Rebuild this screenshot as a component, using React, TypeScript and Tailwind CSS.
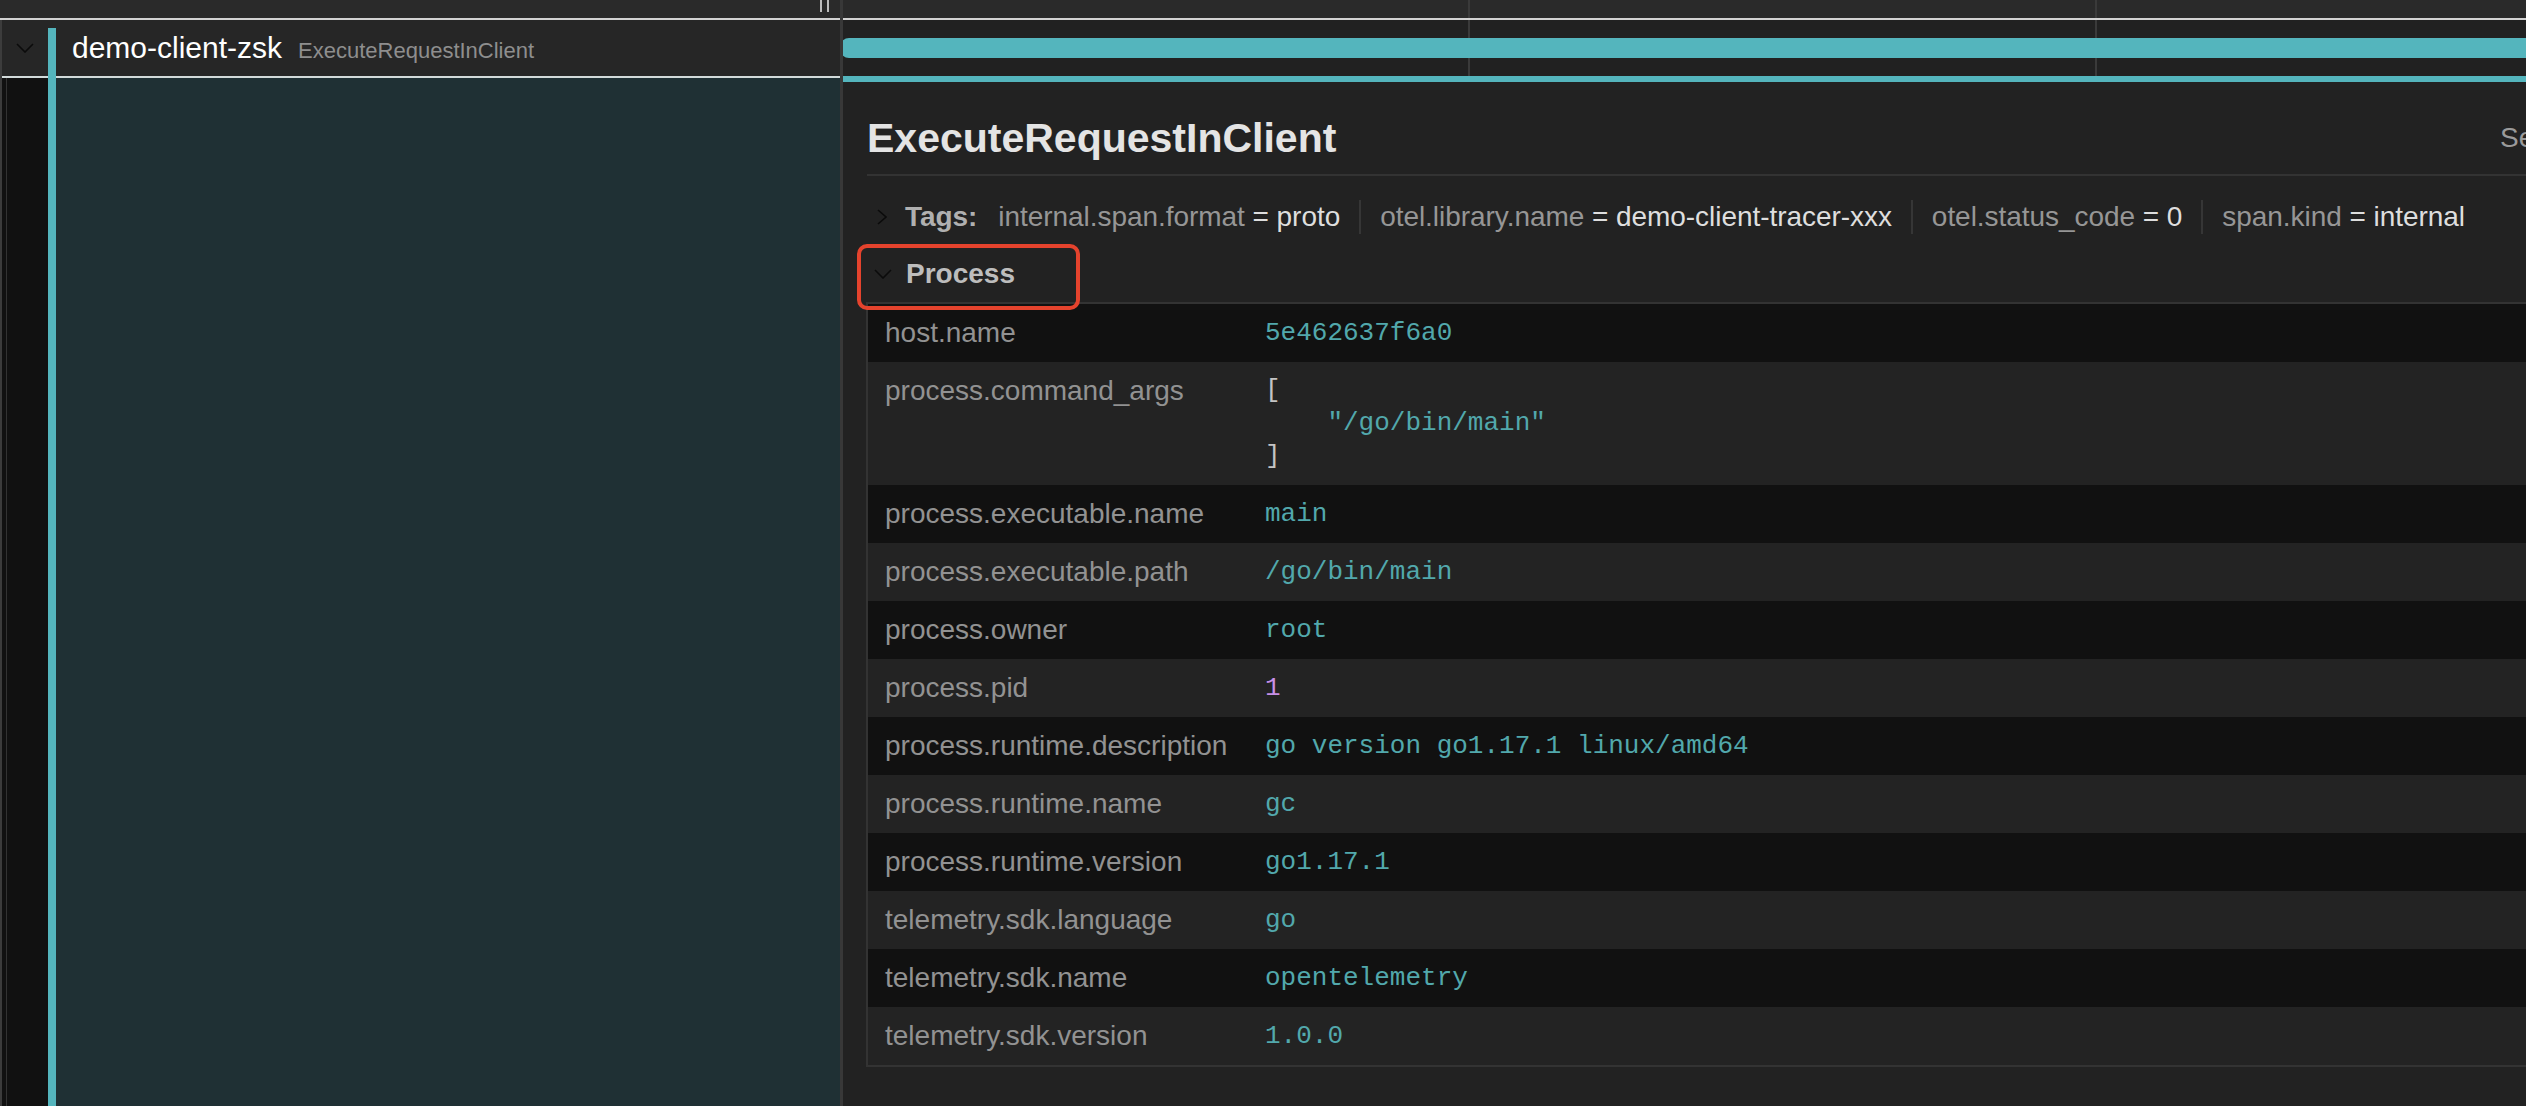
import React from 'react';

const tags = [
  { key: 'internal.span.format', value: 'proto' },
  { key: 'otel.library.name', value: 'demo-client-tracer-xxx' },
  { key: 'otel.status_code', value: '0' },
  { key: 'span.kind', value: 'internal' },
];

const processRows = [
  { key: 'host.name', value: '5e462637f6a0' },
  { key: 'process.command_args', value: '', list: ['/go/bin/main'] },
  { key: 'process.executable.name', value: 'main' },
  { key: 'process.executable.path', value: '/go/bin/main' },
  { key: 'process.owner', value: 'root' },
  { key: 'process.pid', value: '1', numeric: true },
  { key: 'process.runtime.description', value: 'go version go1.17.1 linux/amd64' },
  { key: 'process.runtime.name', value: 'gc' },
  { key: 'process.runtime.version', value: 'go1.17.1' },
  { key: 'telemetry.sdk.language', value: 'go' },
  { key: 'telemetry.sdk.name', value: 'opentelemetry' },
  { key: 'telemetry.sdk.version', value: '1.0.0' },
];

function ChevronDown({ className }: { className?: string }) {
  return (
    <svg className={className} width="18" height="10" viewBox="0 0 18 10" fill="none">
      <polyline points="1,1 9,9 17,1" stroke="#0b0b0b" strokeWidth="1.6" />
    </svg>
  );
}

function ChevronRight({ className }: { className?: string }) {
  return (
    <svg className={className} width="10" height="16" viewBox="0 0 10 16" fill="none">
      <polyline points="1,1 9,8 1,15" stroke="#0b0b0b" strokeWidth="1.6" />
    </svg>
  );
}

export default function App() {
  return (
    <div className="relative flex h-[1106px] w-full overflow-hidden bg-[#222] font-['Liberation_Sans',Arial,sans-serif]">
      {/* Left: span name column */}
      <div className="flex w-[840px] shrink-0 flex-col">
        <div className="relative h-[18px] bg-[#2a2a2a]">
          <div className="absolute left-[820px] top-0 flex h-[12px] gap-[5px]">
            <span className="w-[2px] bg-[#bdbdbd]" />
            <span className="w-[2px] bg-[#bdbdbd]" />
          </div>
        </div>
        <div className="h-[2px] bg-[#d2d2d2]" />
        <div className="flex flex-1">
          <div className="flex w-[48px] flex-col border-l-2 border-[#3c3c3c]">
            <div className="flex h-[56px] items-center justify-center bg-[#262626]">
              <ChevronDown />
            </div>
            <div className="h-[2px] bg-[#d2dada]" />
            <div className="flex-1 bg-[#111] pl-[4px]">
              <div className="h-full w-[1px] bg-[#333]" />
            </div>
          </div>
          <div className="flex w-[8px] flex-col bg-[#262626]">
            <div className="mt-[8px] flex-1 bg-[#54b5bd]" />
          </div>
          <div className="flex flex-1 flex-col">
            <div className="flex h-[56px] items-baseline gap-[16px] bg-[#262626] pl-[16px] pt-[10px]">
              <span className="text-[30px] leading-[36px] text-white">demo-client-zsk</span>
              <span className="text-[22px] leading-[36px] text-[#8e8e8e]">ExecuteRequestInClient</span>
            </div>
            <div className="h-[2px] bg-[#d2dada]" />
            <div className="flex-1 bg-[#1f3034]" />
          </div>
        </div>
      </div>

      <div className="w-[3px] shrink-0 bg-[#383838]" />

      {/* Right: timeline + span detail */}
      <div className="flex-1 overflow-hidden">
        <div className="w-[2300px]">
          <div className="flex h-[18px] bg-[#2a2a2a]">
            <div className="w-[627px] border-r-2 border-[#3a3a3a]" />
            <div className="w-[627px] border-r-2 border-[#3a3a3a]" />
          </div>
          <div className="h-[2px] bg-[#d2d2d2]" />
          <div className="relative h-[56px] bg-[#212121]">
            <div className="flex h-full">
              <div className="w-[627px] border-r-2 border-[#3a3a3a]" />
              <div className="w-[627px] border-r-2 border-[#3a3a3a]" />
            </div>
            <div className="absolute left-[-3px] right-0 top-[18px] h-[20px] rounded-l-[9px] bg-[#54b5bd]" />
          </div>
          <div className="h-[6px] bg-[#54b5bd]" />

          <div className="pl-[24px]">
            <div className="flex h-[94px] items-center border-b-2 border-[#333] pt-[20px]">
              <h2 className="w-[1633px] shrink-0 text-[41px] font-bold leading-[48px] text-[#e4e4e4]">
                ExecuteRequestInClient
              </h2>
              <span className="whitespace-nowrap text-[28px] text-[#9a9a9a]">Service: demo-client-zsk</span>
            </div>

            <div className="flex items-center pt-[24px] text-[28px] leading-[34px] tracking-[-0.05px]">
              <ChevronRight className="ml-[10px]" />
              <span className="ml-[18px] font-bold text-[#b0b0b0]">Tags:</span>
              <div className="ml-[21px] flex items-center">
                {tags.map((t, i) => (
                  <span
                    key={t.key}
                    className={
                      i === 0
                        ? 'whitespace-nowrap pr-[19px]'
                        : 'whitespace-nowrap border-l-2 border-[#363636] px-[19px]'
                    }
                  >
                    <span className="text-[#969696]">{t.key}</span>
                    <span className="text-[#dedede]"> = {t.value}</span>
                  </span>
                ))}
              </div>
            </div>

            <div className="mb-[11px] mt-[23px] flex items-center text-[28px] leading-[34px]">
              <ChevronDown className="ml-[7px]" />
              <span className="ml-[14px] font-bold text-[#bdbdbd]">Process</span>
            </div>

            <div className="-ml-[1px] border-2 border-r-0 border-[#333]">
              {processRows.map((r, i) => (
                <div
                  key={r.key}
                  className={
                    i % 2 === 0
                      ? 'grid grid-cols-[380px_1fr] bg-[#111]'
                      : 'grid grid-cols-[380px_1fr] bg-[#232323]'
                  }
                >
                  <div className="px-[17px] py-[12px] text-[28px] leading-[34px] text-[#929292]">{r.key}</div>
                  {r.list ? (
                    <pre className="px-[17px] py-[12px] font-['Liberation_Mono',monospace] text-[26px] leading-[33px] text-[#c4c4c4]">
                      {'[\n'}
                      {r.list.map((item) => (
                        <span key={item} className="text-[#52a8ac]">{`    "${item}"\n`}</span>
                      ))}
                      {']'}
                    </pre>
                  ) : (
                    <pre
                      className={
                        r.numeric
                          ? "px-[17px] py-[12px] font-['Liberation_Mono',monospace] text-[26px] leading-[34px] text-[#c78fe6]"
                          : "px-[17px] py-[12px] font-['Liberation_Mono',monospace] text-[26px] leading-[34px] text-[#52a8ac]"
                      }
                    >
                      {r.value}
                    </pre>
                  )}
                </div>
              ))}
            </div>
          </div>
        </div>
      </div>

      {/* annotation */}
      <div className="absolute left-[857px] top-[244px] h-[66px] w-[223px] rounded-[10px] border-4 border-[#e5432d]" />
    </div>
  );
}
